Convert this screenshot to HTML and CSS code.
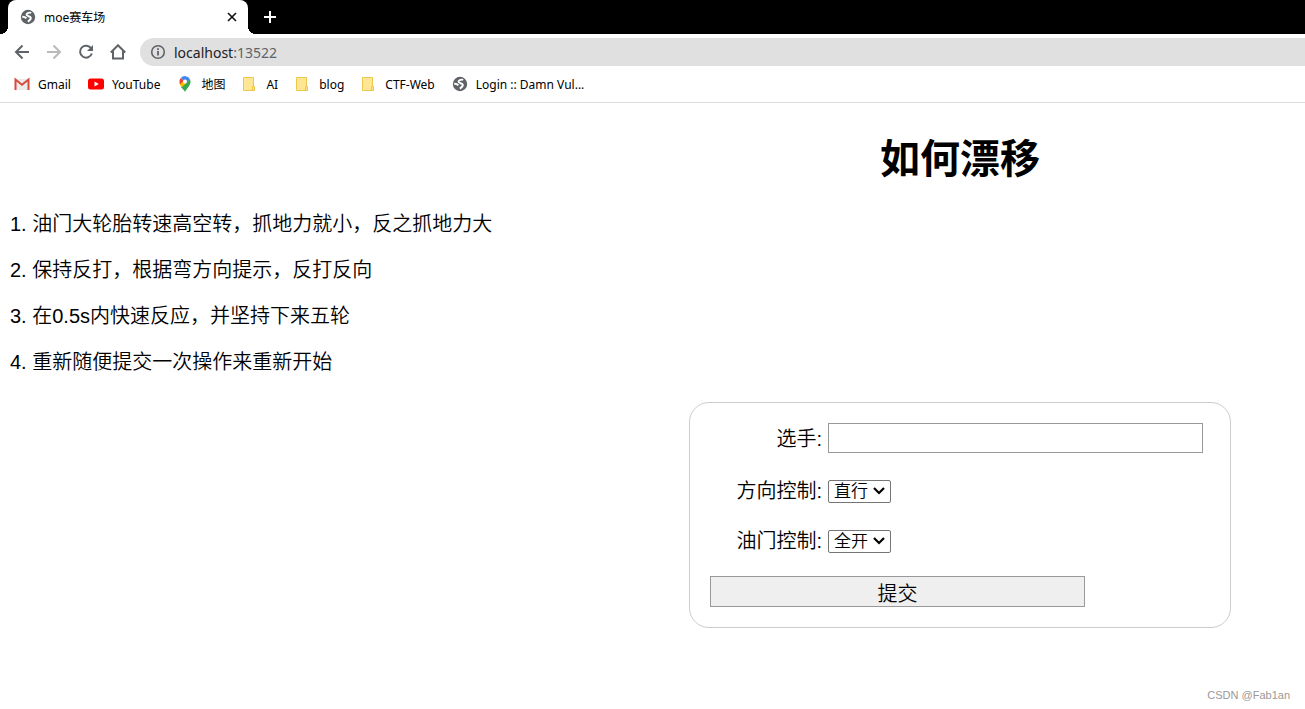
FILE: index.html
```html
<!DOCTYPE html>
<html lang="zh-CN">
<head>
    <meta charset="UTF-8">
    <meta name="viewport" content="width=device-width, initial-scale=1.0">
    <title>moe赛车场</title>
    <link rel="stylesheet" href="styles.css">
</head>
<body>
    <svg class="sprite" aria-hidden="true">
        <symbol id="globe" viewBox="0 0 16 16">
            <circle cx="8" cy="8" r="7.200" fill="#5f6368"/>
            <path d="M11.200 3.800C9.500 3.300 6.800 3.900 6.500 5.500c-.3 1.900 4 1.500 4.300 3.200.3 1.600-1.300 2.900-3 3.900M2.200 7.800c1.600 0 3.200.2 4.200 1.600" fill="none" stroke="#fff" stroke-width="1.900"/>
        </symbol>
        <symbol id="folder" viewBox="0 0 16 16">
            <path d="M1.500 1.500h10v9h1v4h-11z" fill="#ffe695" stroke="#ecc84f"/>
            <path d="M10.500 14v-3.500h2V14z" fill="#ffe695" stroke="#ecc84f"/>
        </symbol>
    </svg>

    <header class="browser">
        <div class="tabs">
            <div class="tab">
                <svg class="icon"><use href="#globe"/></svg>
                <span class="tab-title">moe赛车场</span>
                <button type="button" class="icon-btn tab-close" aria-label="关闭">
                    <svg viewBox="0 0 16 16"><path d="M4 4l8 8M12 4l-8 8" stroke="#111" stroke-width="1.600"/></svg>
                </button>
            </div>
            <button type="button" class="icon-btn tab-new" aria-label="新标签页">
                <svg viewBox="0 0 16 16"><path d="M8 2v12M2 8h12" stroke="#fff" stroke-width="2"/></svg>
            </button>
        </div>

        <div class="toolbar">
            <button type="button" class="icon-btn" aria-label="后退">
                <svg viewBox="0 0 16 16"><path d="M15 8H2M8.500 1.500 2 8l6.500 6.500" stroke="#5f6368" stroke-width="2"/></svg>
            </button>
            <button type="button" class="icon-btn" aria-label="前进">
                <svg viewBox="0 0 16 16"><path d="M1 8h13M7.500 1.500 14 8l-6.500 6.500" stroke="#bababa" stroke-width="2"/></svg>
            </button>
            <button type="button" class="icon-btn" aria-label="刷新">
                <svg viewBox="0 0 16 16"><path d="M13.200 4.500A6 6 0 1 0 13.800 9.500" stroke="#5f6368" stroke-width="2"/><path d="M15 1v6H9z" fill="#5f6368"/></svg>
            </button>
            <button type="button" class="icon-btn" aria-label="主页">
                <svg viewBox="0 0 16 16"><path d="M.8 8.500 8 1.300l7.200 7.200M3 7v7.500h10V7" stroke="#5f6368" stroke-width="2"/></svg>
            </button>
            <div class="address">
                <svg class="icon" viewBox="0 0 16 16"><circle cx="8" cy="8" r="6.300" fill="none" stroke="#5f6368" stroke-width="1.600"/><path d="M8 7v4.500M8 4.300v1.600" stroke="#5f6368" stroke-width="1.800"/></svg>
                <span class="url">localhost<span class="port">:13522</span></span>
            </div>
        </div>

        <nav class="bookmarks">
            <a href="#">
                <svg class="icon" viewBox="0 0 16 16"><path d="M1 3h14v11H1z" fill="#ececec"/><path d="M1.500 14V3.500L8 8.800l6.500-5.300V14" fill="none" stroke="#d54b3d" stroke-width="2"/></svg>
                Gmail
            </a>
            <a href="#">
                <svg class="icon" viewBox="0 0 16 16"><rect y="2.500" width="16" height="11" rx="2.500" fill="#f00"/><path d="M6.500 5.500v5L10.800 8z" fill="#fff"/></svg>
                YouTube
            </a>
            <a href="#">
                <svg class="icon" viewBox="0 0 16 16">
                    <path d="M8 16c.8-2.700 5.500-6 5.500-10.300A5.600 5.600 0 0 0 12.800 3L4 11.300C5.800 13.200 7.300 14.500 8 16z" fill="#34a853"/>
                    <path d="M2.700 7.700c.3 1.400 1.100 2.500 2 3.600L9.500 7 6 4.500z" fill="#fbbc04"/>
                    <path d="M3.800 2 7 4.800 2.900 8.200C2.100 6 2.400 3.600 3.800 2z" fill="#ea4335"/>
                    <path d="M3.800 2a5.500 5.500 0 0 1 9 1L9 7.500 6.300 4.300z" fill="#4285f4"/>
                    <circle cx="8" cy="5.500" r="2" fill="#fff"/>
                </svg>
                地图
            </a>
            <a href="#"><svg class="icon"><use href="#folder"/></svg>AI</a>
            <a href="#"><svg class="icon"><use href="#folder"/></svg>blog</a>
            <a href="#"><svg class="icon"><use href="#folder"/></svg>CTF-Web</a>
            <a href="#"><svg class="icon"><use href="#globe"/></svg>Login :: Damn Vul...</a>
        </nav>
    </header>

    <main class="page">
        <h1>如何漂移</h1>
        <p>1. 油门大轮胎转速高空转，抓地力就小，反之抓地力大</p>
        <p>2. 保持反打，根据弯方向提示，反打反向</p>
        <p>3. 在0.5s内快速反应，并坚持下来五轮</p>
        <p>4. 重新随便提交一次操作来重新开始</p>

        <div class="form-area">
            <form>
                <div class="row">
                    <label for="driver">选手:</label>
                    <input type="text" id="driver" name="driver">
                </div>
                <div class="row">
                    <label for="direction">方向控制:</label>
                    <select id="direction" name="direction">
                        <option>直行</option>
                    </select>
                </div>
                <div class="row">
                    <label for="throttle">油门控制:</label>
                    <select id="throttle" name="throttle">
                        <option>全开</option>
                    </select>
                </div>
                <button type="submit" class="submit">提交</button>
            </form>
        </div>
    </main>

    <footer class="credit">CSDN @Fab1an</footer>
</body>
</html>
```
FILE: styles.css
```css
* {
    box-sizing: border-box;
}

body {
    display: flex;
    flex-direction: column;
    min-height: 100vh;
    margin: 0;
    background: #fff;
    color: #000;
    font-family: "Liberation Sans", "Noto Sans CJK SC DemiLight", "Noto Sans CJK SC", sans-serif;
    font-size: 20px;
}

.sprite {
    display: none;
}

/* browser bar */
.browser {
    border-bottom: 1px solid #dadce0;
    font-family: "Noto Sans", "Noto Sans CJK SC", sans-serif;
    font-size: 12px;
}

.icon {
    flex: none;
    width: 16px;
    height: 16px;
}

.icon-btn {
    display: flex;
    width: 16px;
    height: 16px;
    padding: 0;
    border: 0;
    background: none;
}

.icon-btn svg {
    width: 16px;
    height: 16px;
    fill: none;
}

.tabs {
    display: flex;
    align-items: center;
    gap: 14px;
    height: 34px;
    padding-left: 8px;
    background: #000;
}

.tab {
    display: flex;
    align-items: center;
    position: relative;
    gap: 8px;
    width: 240px;
    height: 34px;
    padding: 0 8px 0 12px;
    border-radius: 8px 8px 0 0;
    background: #fff;
}

/* curved feet of the active tab */
.tab::before,
.tab::after {
    content: "";
    position: absolute;
    bottom: 0;
    width: 8px;
    height: 8px;
}

.tab::before {
    left: -8px;
    background: radial-gradient(circle at 0 0, #000 8px, #fff 8px);
}

.tab::after {
    right: -8px;
    background: radial-gradient(circle at 100% 0, #000 8px, #fff 8px);
}

.tab-title {
    flex: 1;
}

.toolbar {
    display: flex;
    align-items: center;
    gap: 16px;
    padding: 4px 0 0 14px;
}

.address {
    display: flex;
    flex: 1;
    align-items: center;
    gap: 8px;
    height: 28px;
    margin-left: -2px;
    padding-left: 10px;
    border-radius: 14px 0 0 14px;
    background: #e0e0e0;
    color: #202124;
    font-size: 14px;
}

.port {
    color: #5f6368;
}

.bookmarks {
    display: flex;
    gap: 17px;
    height: 36px;
    padding-left: 14px;
}

.bookmarks a {
    display: flex;
    align-items: center;
    gap: 8px;
    color: #000;
    text-decoration: none;
    white-space: nowrap;
}

/* page */
.page {
    padding: 0 10px;
}

h1 {
    width: 690px;
    margin: 30px -10px 26px auto;
    font-family: "Liberation Sans", "Noto Sans CJK SC", sans-serif;
    font-size: 40px;
    line-height: 52px;
    text-align: center;
}

p {
    margin: 0 0 20px;
    line-height: 26px;
}

.form-area {
    width: 690px;
    margin: 27px -10px 0 auto;
}

form {
    display: flex;
    flex-direction: column;
    gap: 20px;
    width: 542px;
    margin: 0 auto;
    padding: 20px;
    border: 1px solid #ccc;
    border-radius: 20px;
}

.row {
    display: flex;
    align-items: center;
    gap: 6px;
    height: 30px;
}

.row:first-child {
    height: 33px;
    align-items: flex-start;
}

label {
    width: 112px;
    line-height: 32px;
    text-align: right;
}

input {
    width: 375px;
    height: 30px;
    border: 1px solid #999;
    font-size: 20px;
}

select {
    width: 63px;
    height: 23px;
    padding: 0 0 0 5px;
    border: 1px solid #767676;
    border-radius: 2px;
    appearance: none;
    background: #fff url("data:image/svg+xml,%3Csvg xmlns='http://www.w3.org/2000/svg' width='12' height='8'%3E%3Cpath d='M1 1l5 5 5-5' fill='none' stroke='%23000' stroke-width='2.2'/%3E%3C/svg%3E") no-repeat right 5px center;
    color: #000;
    font-family: inherit;
    font-size: 17px;
}

.submit {
    width: 375px;
    height: 31px;
    padding: 1px 0 0;
    border: 1px solid #999;
    background: #efefef;
    color: #000;
    font-family: inherit;
    font-size: 20px;
}

.credit {
    margin-top: auto;
    padding: 0 15px 7px;
    color: #999;
    font-size: 11px;
    line-height: 14px;
    text-align: right;
}
```
